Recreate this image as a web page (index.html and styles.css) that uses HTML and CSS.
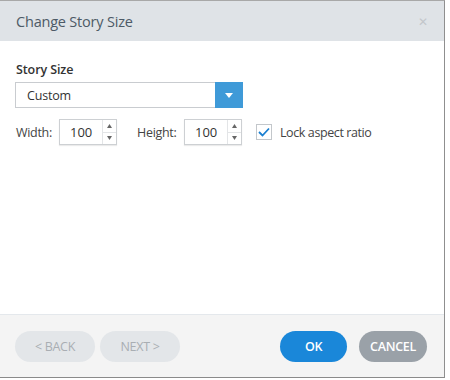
FILE: index.html
```html
<!DOCTYPE html>
<html>
<head>
<meta charset="utf-8">
<link rel="stylesheet" href="styles.css">
</head>
<body>
<div class="dialog">
  <div class="header">
    <span class="title">Change Story Size</span>
    <span class="close">&#x2715;</span>
  </div>
  <div class="content">
    <div class="label">Story Size</div>
    <div class="select">
      <span class="select-text">Custom</span>
      <span class="select-btn"><svg width="8" height="5" viewBox="0 0 8 5"><path d="M0 0H8L4 5Z" fill="#fff"/></svg></span>
    </div>
    <div class="row">
      <span class="field-label">Width:</span>
      <div class="spin">
        <span class="spin-val">100</span>
        <span class="spin-arrows">
          <span class="arr"><svg width="5" height="4" viewBox="0 0 5 4"><path d="M0 4H5L2.5 0Z" fill="#666"/></svg></span>
          <span class="arr"><svg width="5" height="4" viewBox="0 0 5 4"><path d="M0 0H5L2.5 4Z" fill="#666"/></svg></span>
        </span>
      </div>
      <span class="field-label h">Height:</span>
      <div class="spin">
        <span class="spin-val">100</span>
        <span class="spin-arrows">
          <span class="arr"><svg width="5" height="4" viewBox="0 0 5 4"><path d="M0 4H5L2.5 0Z" fill="#666"/></svg></span>
          <span class="arr"><svg width="5" height="4" viewBox="0 0 5 4"><path d="M0 0H5L2.5 4Z" fill="#666"/></svg></span>
        </span>
      </div>
      <span class="check"><svg width="12" height="10" viewBox="0 0 12 10"><path d="M1 5L4.5 8.5L11 1.5" fill="none" stroke="#1a7fd1" stroke-width="1.8"/></svg></span>
      <span class="check-label">Lock aspect ratio</span>
    </div>
  </div>
  <div class="footer">
    <span class="btn dis">&lt; BACK</span>
    <span class="btn dis next">NEXT &gt;</span>
    <span class="spacer"></span>
    <span class="btn ok">OK</span>
    <span class="btn cancel">CANCEL</span>
  </div>
</div>
</body>
</html>
```
FILE: styles.css
```css
html, body { margin: 0; padding: 0; background: #fff; }
body { width: 450px; height: 380px; overflow: hidden; font-family: "Open Sans", "Noto Sans", sans-serif; }
.dialog {
  width: 444px; height: 376px;
  border-top: 1px solid #a8a8a8; border-right: 1px solid #8f8f8f; border-bottom: 1px solid #8a8a8a;
  display: flex; flex-direction: column; background: #fff;
}
.header {
  height: 40px; background: #dfe3e7; display: flex; align-items: center;
  justify-content: space-between; padding: 0 16px 0 16px; flex: none;
}
.title { font-size: 14.5px; color: #4d5a66; letter-spacing: -0.2px; }
.close { font-size: 12px; color: #c3c7cb; }
.content { flex: 1; padding: 20px 15px 0 15px; }
.label { font-size: 12.5px; font-weight: 600; color: #333; margin: 0 0 4px 1px; letter-spacing: -0.1px; }
.select {
  width: 228px; height: 26px; border: 1px solid #c9ccd0; box-sizing: border-box;
  display: flex; align-items: stretch;
}
.select-text { flex: 1; font-size: 12.5px; color: #333; padding-left: 11px; display: flex; align-items: center; letter-spacing: -0.2px; }
.select-btn { width: 28px; background: #3f9ad8; display: flex; align-items: center; justify-content: center; margin: -1px -1px -1px 0; }
.row { display: flex; align-items: center; margin-top: 11px; height: 26px; }
.field-label { font-size: 12.5px; color: #444; width: 43px; padding-left: 1px; letter-spacing: -0.3px; }
.field-label.h { margin-left: 19px; width: 47px; }
.spin {
  width: 58px; height: 26px; box-sizing: border-box; border: 1px solid #cdd0d3;
  display: flex; box-shadow: 0 1px 1px rgba(0,0,0,0.08);
}
.spin-val { flex: 1; font-size: 13px; color: #333; padding-left: 10px; display: flex; align-items: center; }
.spin-arrows { width: 13px; display: flex; flex-direction: column; border-left: 1px solid #e3e5e7; }
.arr { flex: 1; display: flex; align-items: center; justify-content: center; }
.arr + .arr { border-top: 1px solid #e3e5e7; }
.check {
  width: 16px; height: 16px; box-sizing: border-box; border: 1px solid #c3c7cb;
  margin-left: 14px; display: flex; align-items: center; justify-content: center;
}
.check-label { font-size: 12.5px; color: #444; margin-left: 8px; letter-spacing: -0.4px; }
.footer {
  height: 62px; flex: none; background: #f4f4f4; border-top: 1px solid #e4e8ec;
  display: flex; align-items: center; padding: 0 17px 0 15px;
}
.btn {
  height: 31px; border-radius: 16px; display: flex; align-items: center; justify-content: center;
  font-size: 12.5px; letter-spacing: -0.3px;
}
.dis { width: 80px; background: #e3e6e9; color: #a9aeb3; }
.next { margin-left: 5px; }
.spacer { flex: 1; }
.ok { width: 67px; background: #1a87d9; color: #fff; font-weight: 600; }
.cancel { width: 68px; background: #9aa1a8; color: #fff; margin-left: 12px; font-weight: 600; }
```
